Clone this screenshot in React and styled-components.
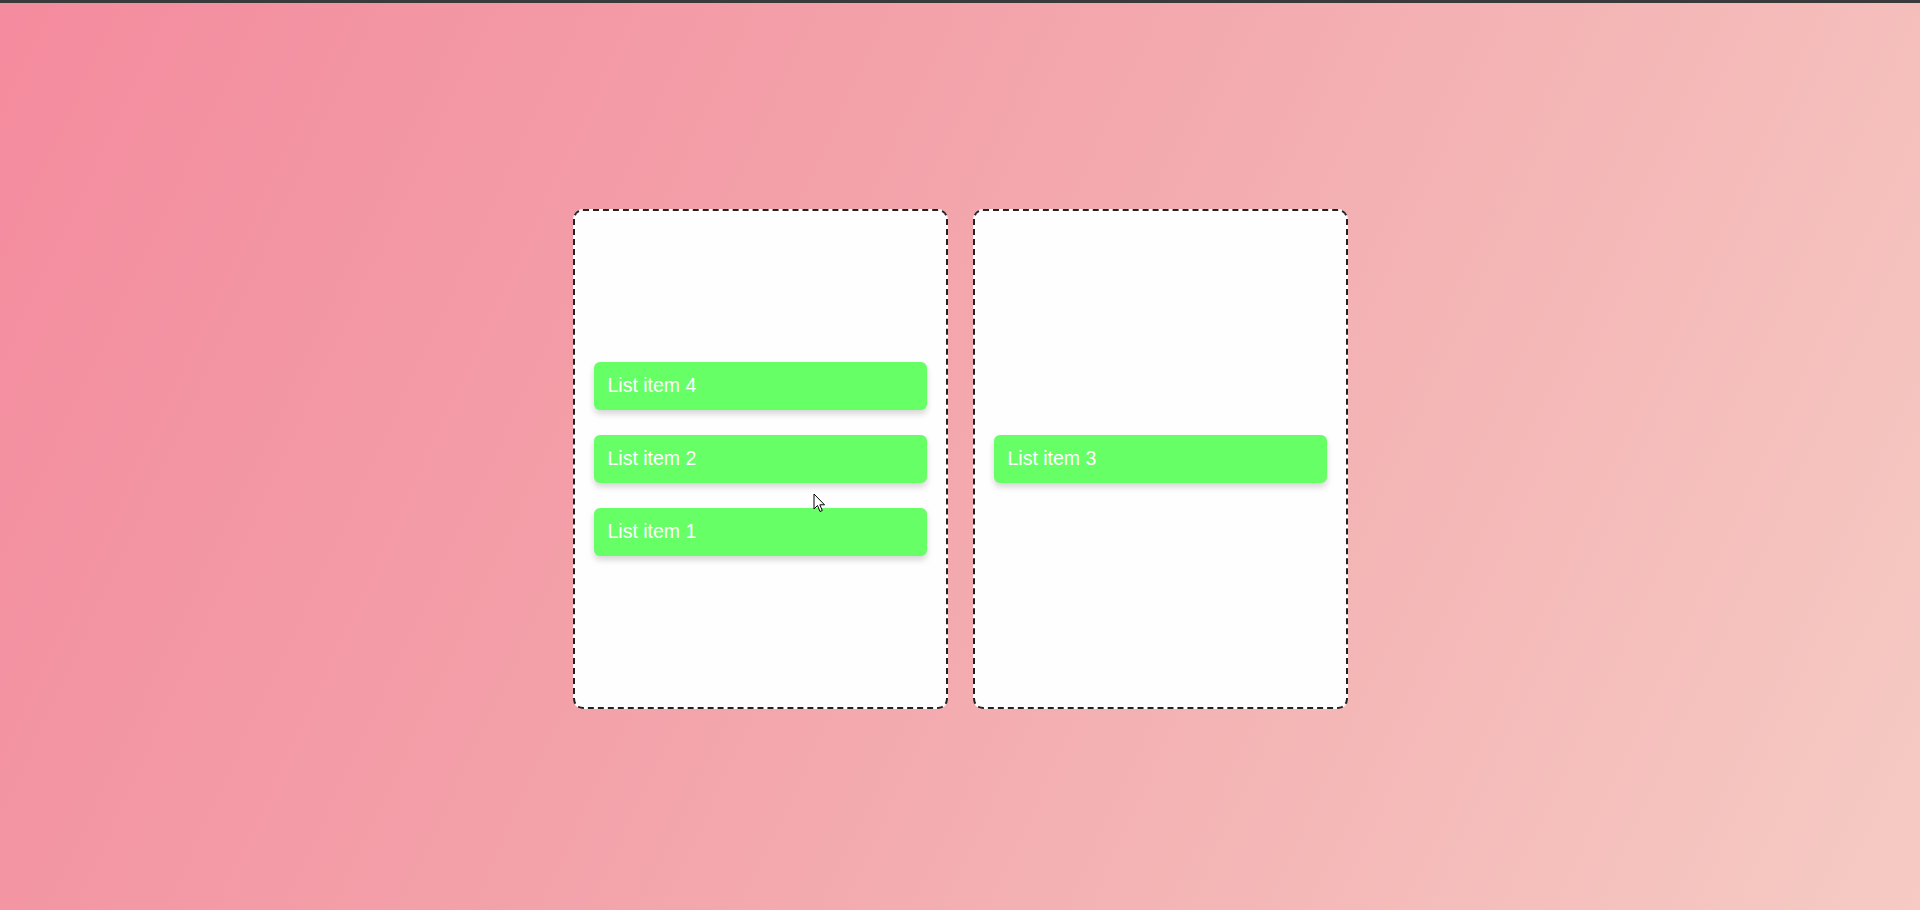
import React from "react";
import styled, { createGlobalStyle } from "styled-components";

const Global = createGlobalStyle`
  html, body { margin: 0; padding: 0; }
  body { font-family: "Liberation Sans", Arial, sans-serif; overflow: hidden; }
`;

const Page = styled.div`
  width: 1920px;
  height: 910px;
  display: flex;
  flex-direction: column;
  position: relative;
`;

const TopBar = styled.div`
  height: 3px;
  background: #3a3a3a;
  flex: none;
`;

const Stage = styled.main`
  flex: 1;
  display: flex;
  align-items: center;
  justify-content: center;
  gap: 25px;
  padding-top: 4px;
  background: linear-gradient(115deg, #f48b9e 0%, #f3a2aa 40%, #f4b6b6 70%, #f6cbc4 100%);
`;

const Column = styled.section`
  box-sizing: border-box;
  width: 375px;
  height: 500px;
  padding: 0 19px;
  background: #fefefe;
  border: 2px dashed #222;
  border-radius: 10px;
  display: flex;
  flex-direction: column;
  justify-content: center;
  gap: 25px;
`;

const Item = styled.div`
  box-sizing: border-box;
  height: 48px;
  padding: 0 14px;
  display: flex;
  align-items: center;
  background: #66ff66;
  color: #ffffff;
  border-radius: 6px;
  font-size: 19.5px;
  box-shadow: 0 4px 6px rgba(0, 0, 0, 0.16);
`;

const Cursor = styled.svg`
  position: absolute;
  left: 813px;
  top: 493px;
  width: 13px;
  height: 20px;
  pointer-events: none;
`;

export default function App() {
  const columns = [
    ["List item 4", "List item 2", "List item 1"],
    ["List item 3"],
  ];
  return (
    <>
      <Global />
      <Page>
        <TopBar />
        <Stage>
          {columns.map((items, i) => (
            <Column key={i}>
              {items.map((t) => (
                <Item key={t}>{t}</Item>
              ))}
            </Column>
          ))}
        </Stage>
        <Cursor viewBox="0 0 13 20">
          <path
            d="M1 1 L1 16 L4.5 12.5 L7 18.5 L9.3 17.5 L6.8 11.8 L11.5 11.8 Z"
            fill="#fff"
            stroke="#000"
            strokeWidth="1"
            strokeLinejoin="round"
          />
        </Cursor>
      </Page>
    </>
  );
}
